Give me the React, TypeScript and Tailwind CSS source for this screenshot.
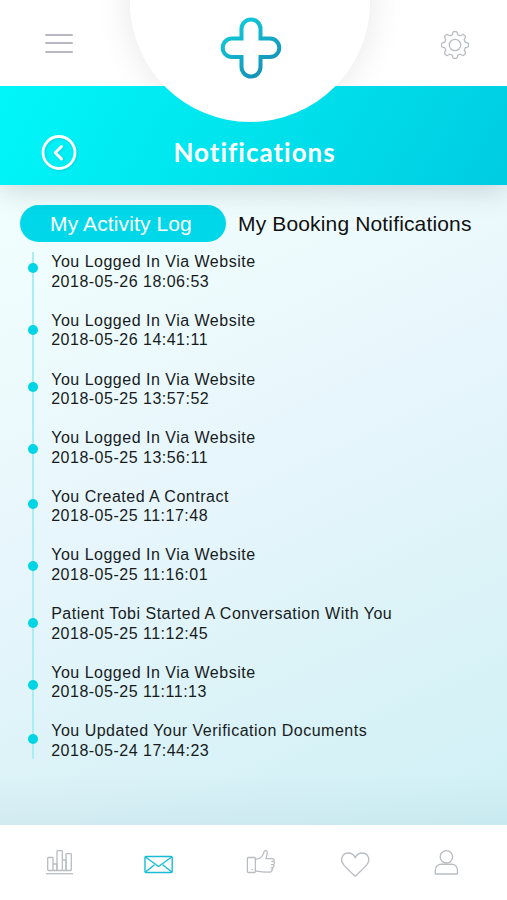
import React from 'react';

type Entry = { title: string; time: string; dot: string };

const entries: Entry[] = [
  { title: 'You Logged In Via Website', time: '2018-05-26 18:06:53', dot: 'mt-[11px]' },
  { title: 'You Logged In Via Website', time: '2018-05-26 14:41:11', dot: 'mt-[14px]' },
  { title: 'You Logged In Via Website', time: '2018-05-25 13:57:52', dot: 'mt-[12.5px]' },
  { title: 'You Logged In Via Website', time: '2018-05-25 13:56:11', dot: 'mt-[16px]' },
  { title: 'You Created A Contract', time: '2018-05-25 11:17:48', dot: 'mt-[13px]' },
  { title: 'You Logged In Via Website', time: '2018-05-25 11:16:01', dot: 'mt-[15.5px]' },
  { title: 'Patient Tobi Started A Conversation With You', time: '2018-05-25 11:12:45', dot: 'mt-[14px]' },
  { title: 'You Logged In Via Website', time: '2018-05-25 11:11:13', dot: 'mt-[17.5px]' },
  { title: 'You Updated Your Verification Documents', time: '2018-05-24 17:44:23', dot: 'mt-[13px]' },
];

function Logo() {
  return (
    <svg width="64" height="64" viewBox="0 0 64 64" fill="none">
      <defs>
        <linearGradient id="logo" x1="14" y1="8" x2="48" y2="56" gradientUnits="userSpaceOnUse">
          <stop stopColor="#0fcbd9" />
          <stop offset="1" stopColor="#1590b8" />
        </linearGradient>
      </defs>
      <path
        d="M22.500 22.500V13a9.500 9.500 0 0 1 19 0v9.500h9.500a9.300 9.300 0 0 1 0 18.600h-9.500V51a9.500 9.500 0 0 1-19 0v-9.900H13a9.300 9.300 0 0 1 0-18.600z"
        stroke="url(#logo)"
        strokeWidth="4"
      />
    </svg>
  );
}

function Gear() {
  const points = Array.from({ length: 97 }, (_, i) => {
    const a = (i / 96) * Math.PI * 2;
    const r = 12 + 1.5 * Math.tanh(3 * Math.cos(8 * a));
    return `${(15 + r * Math.sin(a)).toFixed(2)},${(15 - r * Math.cos(a)).toFixed(2)}`;
  }).join(' ');
  return (
    <svg width="30" height="30" viewBox="0 0 30 30" fill="none" stroke="#b9bdc2" strokeWidth="1.3">
      <polygon points={points} strokeLinejoin="round" />
      <circle cx="15" cy="15" r="5.700" />
    </svg>
  );
}

export default function App() {
  return (
    <div className="flex h-[900px] w-[507px] flex-col overflow-hidden bg-white font-['Liberation_Sans',Arial,sans-serif]">
      <header className="relative z-10 flex h-[185px] shrink-0 flex-col shadow-[0_6px_26px_rgba(70,80,90,0.22)]">
        <div className="flex h-[85.5px] shrink-0 items-start justify-between bg-white pl-[45px] pr-[37px]">
          <div className="mt-[33.5px] flex w-7 flex-col gap-[6.500px]">
            <span className="h-[2px] rounded bg-[#b8b8c0]" />
            <span className="h-[2px] rounded bg-[#b8b8c0]" />
            <span className="h-[2px] rounded bg-[#b8b8c0]" />
          </div>
          <div className="mt-[30px]"><Gear /></div>
        </div>
        <div className="flex flex-1 bg-[linear-gradient(120deg,#00f7fa_0%,#00e2ec_50%,#00cce2_100%)]">
          <svg className="ml-[40px] mt-[48px] shrink-0 drop-shadow-[1px_1px_1px_rgba(0,110,140,0.2)]" width="38" height="38" viewBox="0 0 38 38" fill="none" stroke="white">
            <circle cx="19" cy="18.500" r="16" strokeWidth="2.800" />
            <path d="m21.500 12.500-6.300 6.200 6.300 6.200" strokeWidth="3" strokeLinecap="round" strokeLinejoin="round" />
          </svg>
          <h1 className="ml-[95.5px] mt-[50px] whitespace-nowrap font-['Lato',sans-serif] text-[26px] font-bold leading-8 tracking-[0.980px] text-white">Notifications</h1>
        </div>
        <div className="absolute inset-x-0 top-0 h-[85.5px] overflow-hidden">
          <div className="absolute left-[130px] top-[-119px] h-[240px] w-[240px] rounded-full shadow-[0_0_36px_rgba(0,0,0,0.1)]" />
        </div>
        <div className="absolute left-[130px] top-[-119px] flex h-[240.500px] w-[240px] items-end justify-center rounded-full bg-white pb-[41.500px] pl-[2px]">
          <Logo />
        </div>
      </header>

      <main className="h-[640px] shrink-0 bg-[linear-gradient(to_top,rgba(90,130,150,0.07),rgba(90,130,150,0)_52px),linear-gradient(155deg,#f1fffe_0%,#effcfd_16%,#e7f6fc_44%,#dcf3f8_70%,#d0f1f6_100%)] pt-[20px]">
        <div className="flex h-[37px] items-center pl-[20px] text-[21px]">
          <button className="h-[37px] w-[206px] shrink-0 whitespace-nowrap rounded-full bg-[#00d8e9] pr-[4px] text-white tracking-[0.120px]">My Activity Log</button>
          <button className="ml-3 whitespace-nowrap tracking-[0.150px] text-[#111]">My Booking Notifications</button>
        </div>
        <div className="relative mt-[10px] pl-[28px]">
          <span className="absolute left-[32px] top-0 h-[507px] w-[2px] bg-[#a9eef4]" />
          {entries.map((e) => (
            <div key={e.time} className="flex h-[58.620px] items-start">
              <span className={'relative h-[10px] w-[10px] shrink-0 rounded-full bg-[#00d5e5] ' + e.dot} />
              <div className="ml-[13.200px] mt-[0.300px] whitespace-nowrap text-[16px] leading-[19.540px] tracking-[0.500px] text-[#171b1c]">
                <p>{e.title}</p>
                <p>{e.time}</p>
              </div>
            </div>
          ))}
        </div>
      </main>

      <nav className="flex flex-1 items-start bg-white pl-[44px] pt-[22px] text-[#b9bdc2]">
        <svg width="32" height="32" viewBox="44 847 32 32" fill="none" stroke="currentColor" strokeWidth="1.300">
          <path d="M46 873.700h27" />
          <rect x="47.700" y="857.500" width="5.300" height="13" rx="0.700" />
          <rect x="57" y="850.600" width="5.300" height="19.900" rx="0.700" />
          <rect x="66" y="853.600" width="5.300" height="16.900" rx="0.700" />
          <path d="M53 864h4v6.500h-4M62.300 860h3.700v10.500h-3.700" />
        </svg>
        <svg className="ml-[67px] text-[#16bdd4]" width="32" height="32" viewBox="143 847 32 32" fill="none" stroke="currentColor" strokeWidth="1.400" strokeLinejoin="round">
          <rect x="145" y="856.500" width="27.200" height="16" rx="1" />
          <path d="m145.500 857 13.100 9.500 13.100-9.500M145.500 872l9-7.200M171.700 872l-9-7.200" />
        </svg>
        <svg className="ml-[69px]" width="34" height="32" viewBox="244 847 34 32" fill="none" stroke="currentColor" strokeWidth="1.300" strokeLinecap="round" strokeLinejoin="round">
          <rect x="247.400" y="857.500" width="8" height="15" rx="1" />
          <path d="M255.400 859.300c4.500-.4 7.600-3.500 8.700-7.500.6-2 3.200-1.300 3.200.8 0 2.200-.9 4.200-1.400 6h6.300c1.900 0 2.300 1.500 1.600 2.700.8 1 .7 2.300-.2 3.100.5 1.100.2 2.300-.8 2.900.3 1.100-.1 2-.9 2.400.2 1.300-.4 2.400-2 2.400-5.500 0-9.900-.2-14.500-1.200M271.800 861.300h1.800M271.500 864.700h1.700M271 867.900h1.300M252.200 869.600h.3" />
        </svg>
        <svg className="ml-[61px]" width="32" height="32" viewBox="339 847 32 32" fill="none" stroke="currentColor" strokeWidth="1.350" strokeLinejoin="round">
          <path d="M355.200 876.200c-4.800-4.300-8.500-7.700-11.500-11.300-4.500-6-.8-11.900 4.500-11.900 3.200 0 5.800 1.900 7 4.700 1.300-2.800 3.900-4.700 7.100-4.700 5.200 0 8.900 6 4.400 11.900-3 3.600-6.700 7-11.500 11.300z" />
        </svg>
        <svg className="ml-[60px]" width="32" height="32" viewBox="431 847 32 32" fill="none" stroke="currentColor" strokeWidth="1.350" strokeLinejoin="round">
          <circle cx="446.400" cy="856.800" r="6.200" />
          <path d="M435.300 874v-3.600c0-4 2.700-6.200 6.200-6.200h9.800c3.500 0 6.200 2.200 6.200 6.200v3.600z" />
        </svg>
      </nav>
    </div>
  );
}
